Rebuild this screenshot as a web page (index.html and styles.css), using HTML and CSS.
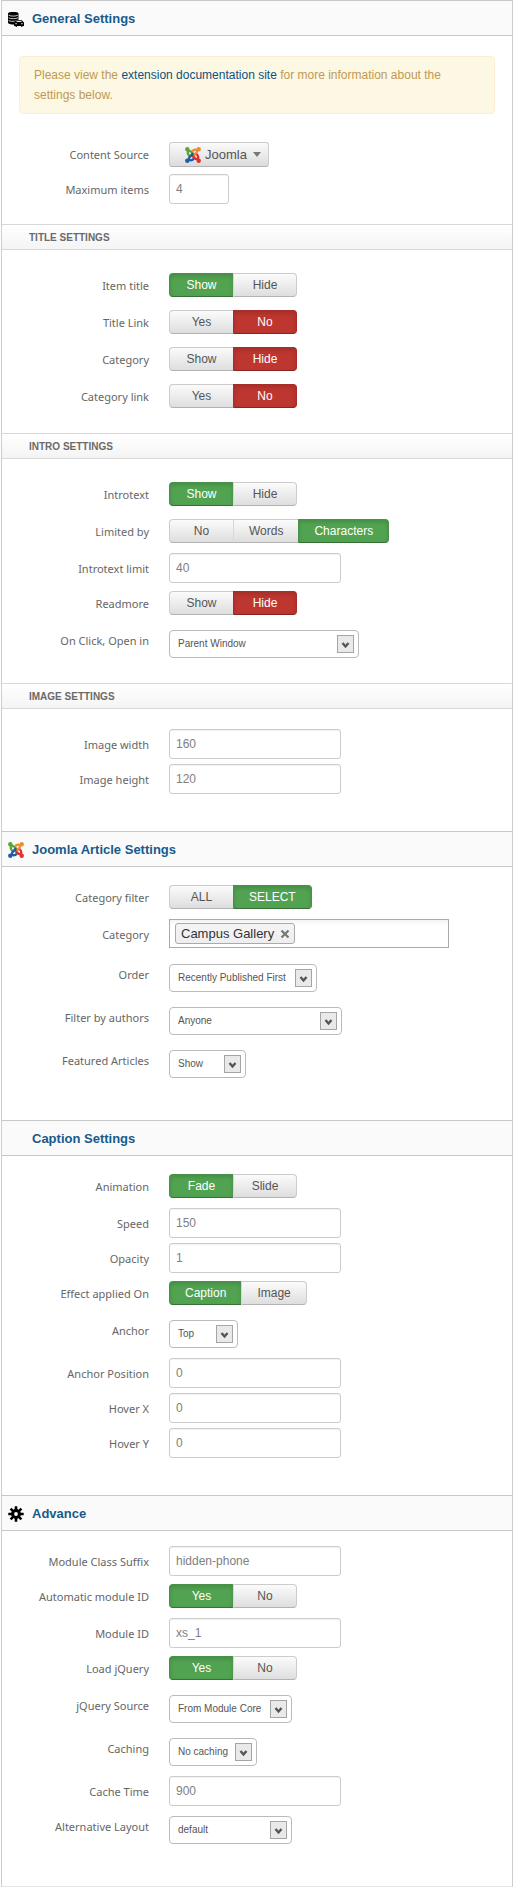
FILE: index.html
```html
<!DOCTYPE html>
<html lang="en">
<head>
<meta charset="utf-8">
<meta name="viewport" content="width=device-width, initial-scale=1">
<title>Module Settings</title>
<link rel="stylesheet" href="styles.css">
</head>
<body>
<svg class="defs" aria-hidden="true">
  <symbol id="joomla" viewBox="0 0 16 16">
    <g fill="none" stroke-width="2.3" stroke-linejoin="round">
      <path stroke="#5aa53a" d="M4.400 9C2.400 7 2 4.200 4.200 3.900 5.600 3.800 6.500 5 9.600 8"/>
      <path stroke="#f28b30" d="M4.400 9C2.400 7 2 4.200 4.200 3.900 5.600 3.800 6.500 5 9.600 8" transform="rotate(90 8 8)"/>
      <path stroke="#e0302c" d="M4.400 9C2.400 7 2 4.200 4.200 3.900 5.600 3.800 6.500 5 9.600 8" transform="rotate(180 8 8)"/>
      <path stroke="#1a5ea8" d="M4.400 9C2.400 7 2 4.200 4.200 3.900 5.600 3.800 6.500 5 9.600 8" transform="rotate(270 8 8)"/>
    </g>
    <circle cx="2.300" cy="2.300" r="2.200" fill="#5aa53a"/>
    <circle cx="13.700" cy="2.300" r="2.200" fill="#f28b30"/>
    <circle cx="13.700" cy="13.700" r="2.200" fill="#e0302c"/>
    <circle cx="2.300" cy="13.700" r="2.200" fill="#1a5ea8"/>
  </symbol>
  <symbol id="arrow" viewBox="0 0 17 18">
    <rect x=".5" y=".5" width="16" height="17" fill="#e9e9e9" stroke="#a5a5a5"/>
    <path d="M5.500 8l3 3.500 3-3.500" fill="none" stroke="#555" stroke-width="2.400"/>
  </symbol>
</svg>

<form class="panel">
  <section>
    <h2 class="head">
      <svg class="icon" viewBox="0 0 16 16" aria-hidden="true">
        <path d="M0 2.500C0 .6 10.500.6 10.500 2.500v6.300c-2.500 0-3 .7-3.600 1.900L6 11v2.500C3 13.500 0 13 0 11.500z"/>
        <path d="M.6 4.200c2 1.200 7.300 1.200 9.300 0M.6 6.800c2 1.200 7.300 1.200 9.300 0M.6 9.400c1.500 1 4 1.100 6 .8" fill="none" stroke="#fafafa" stroke-width=".8"/>
        <path d="M6 11.500l2.200-2.300h5.600l2.200 2.300v3.500h-1.500v.8h-1.500V15H9v.8H7.500V15H6z"/>
        <path d="M8.500 10.500h5M7.300 12.700h1.500M13.200 12.700h1.500" stroke="#fafafa" stroke-width=".9"/>
      </svg>
      <span>General Settings</span>
    </h2>
    <div class="intro">
      <p class="alert">Please view the <a href="#docs">extension documentation site</a> for more information about the settings below.</p>
    </div>
    <div class="fields fields-first">
      <div class="row row-drop"><span class="label" id="l-source">Content Source</span>
        <button type="button" class="drop" aria-labelledby="l-source"><svg class="icon" aria-hidden="true"><use href="#joomla"/></svg><span>Joomla</span><i class="caret"></i></button></div>
      <div class="row"><label class="label" for="max">Maximum items</label><input class="text short" id="max" value="4"></div>
    </div>

    <h3 class="subhead">TITLE SETTINGS</h3>
    <div class="fields">
      <div class="row row-toggle"><span class="label" id="l-title">Item title</span>
        <div class="toggle" role="radiogroup" aria-labelledby="l-title"><label class="opt yes"><input type="radio" name="title" checked>Show</label><label class="opt"><input type="radio" name="title">Hide</label></div></div>
      <div class="row row-toggle"><span class="label" id="l-tlink">Title Link</span>
        <div class="toggle" role="radiogroup" aria-labelledby="l-tlink"><label class="opt"><input type="radio" name="tlink">Yes</label><label class="opt no"><input type="radio" name="tlink" checked>No</label></div></div>
      <div class="row row-toggle"><span class="label" id="l-cat">Category</span>
        <div class="toggle" role="radiogroup" aria-labelledby="l-cat"><label class="opt"><input type="radio" name="cat">Show</label><label class="opt no"><input type="radio" name="cat" checked>Hide</label></div></div>
      <div class="row row-toggle"><span class="label" id="l-clink">Category link</span>
        <div class="toggle" role="radiogroup" aria-labelledby="l-clink"><label class="opt"><input type="radio" name="clink">Yes</label><label class="opt no"><input type="radio" name="clink" checked>No</label></div></div>
    </div>

    <h3 class="subhead">INTRO SETTINGS</h3>
    <div class="fields">
      <div class="row row-toggle"><span class="label" id="l-intro">Introtext</span>
        <div class="toggle" role="radiogroup" aria-labelledby="l-intro"><label class="opt yes"><input type="radio" name="intro" checked>Show</label><label class="opt"><input type="radio" name="intro">Hide</label></div></div>
      <div class="row row-toggle"><span class="label" id="l-limby">Limited by</span>
        <div class="toggle" role="radiogroup" aria-labelledby="l-limby"><label class="opt"><input type="radio" name="limby">No</label><label class="opt"><input type="radio" name="limby">Words</label><label class="opt yes"><input type="radio" name="limby" checked>Characters</label></div></div>
      <div class="row"><label class="label" for="limit">Introtext limit</label><input class="text" id="limit" value="40"></div>
      <div class="row row-toggle"><span class="label" id="l-more">Readmore</span>
        <div class="toggle" role="radiogroup" aria-labelledby="l-more"><label class="opt"><input type="radio" name="more">Show</label><label class="opt no"><input type="radio" name="more" checked>Hide</label></div></div>
      <div class="row row-select"><label class="label" for="target">On Click, Open in</label>
        <div class="select w-xl"><select id="target"><option>Parent Window</option></select><svg aria-hidden="true"><use href="#arrow"/></svg></div></div>
    </div>

    <h3 class="subhead">IMAGE SETTINGS</h3>
    <div class="fields fields-last">
      <div class="row"><label class="label" for="iw">Image width</label><input class="text" id="iw" value="160"></div>
      <div class="row"><label class="label" for="ih">Image height</label><input class="text" id="ih" value="120"></div>
    </div>
  </section>

  <section>
    <h2 class="head"><svg class="icon" aria-hidden="true"><use href="#joomla"/></svg><span>Joomla Article Settings</span></h2>
    <div class="fields fields-main">
      <div class="row row-toggle"><span class="label" id="l-filter">Category filter</span>
        <div class="toggle" role="radiogroup" aria-labelledby="l-filter"><label class="opt"><input type="radio" name="filter">ALL</label><label class="opt yes"><input type="radio" name="filter" checked>SELECT</label></div></div>
      <div class="row row-tags"><label class="label" for="cats">Category</label>
        <div class="tags"><span class="tag">Campus Gallery<button type="button" class="remove" aria-label="Remove Campus Gallery"><svg viewBox="0 0 10 10" aria-hidden="true"><path d="M1.500 1.500l7 7M8.500 1.500l-7 7" stroke="#777" stroke-width="2.200"/></svg></button></span><input class="tag-input" id="cats"></div></div>
      <div class="row row-select"><label class="label" for="order">Order</label>
        <div class="select w-l"><select id="order"><option>Recently Published First</option></select><svg aria-hidden="true"><use href="#arrow"/></svg></div></div>
      <div class="row row-select"><label class="label" for="authors">Filter by authors</label>
        <div class="select w-full"><select id="authors"><option>Anyone</option></select><svg aria-hidden="true"><use href="#arrow"/></svg></div></div>
      <div class="row row-select"><label class="label" for="featured">Featured Articles</label>
        <div class="select w-s"><select id="featured"><option>Show</option></select><svg aria-hidden="true"><use href="#arrow"/></svg></div></div>
    </div>
  </section>

  <section>
    <h2 class="head"><span class="icon"></span><span>Caption Settings</span></h2>
    <div class="fields fields-main">
      <div class="row row-toggle"><span class="label" id="l-anim">Animation</span>
        <div class="toggle" role="radiogroup" aria-labelledby="l-anim"><label class="opt yes"><input type="radio" name="anim" checked>Fade</label><label class="opt"><input type="radio" name="anim">Slide</label></div></div>
      <div class="row"><label class="label" for="speed">Speed</label><input class="text" id="speed" value="150"></div>
      <div class="row"><label class="label" for="opacity">Opacity</label><input class="text" id="opacity" value="1"></div>
      <div class="row row-toggle"><span class="label" id="l-effect">Effect applied On</span>
        <div class="toggle" role="radiogroup" aria-labelledby="l-effect"><label class="opt yes"><input type="radio" name="effect" checked>Caption</label><label class="opt"><input type="radio" name="effect">Image</label></div></div>
      <div class="row row-select"><label class="label" for="anchor">Anchor</label>
        <div class="select w-xs"><select id="anchor"><option>Top</option></select><svg aria-hidden="true"><use href="#arrow"/></svg></div></div>
      <div class="row"><label class="label" for="apos">Anchor Position</label><input class="text" id="apos" value="0"></div>
      <div class="row"><label class="label" for="hx">Hover X</label><input class="text" id="hx" value="0"></div>
      <div class="row"><label class="label" for="hy">Hover Y</label><input class="text" id="hy" value="0"></div>
    </div>
  </section>

  <section>
    <h2 class="head">
      <svg class="icon" viewBox="0 0 16 16" aria-hidden="true">
        <path d="M8 .3v15.400M.3 8h15.400M2.600 2.600l10.800 10.800M13.400 2.600L2.600 13.400" stroke="#000" stroke-width="2.600"/>
        <circle cx="8" cy="8" r="3.400" fill="#fafafa" stroke="#000" stroke-width="3"/>
      </svg>
      <span>Advance</span>
    </h2>
    <div class="fields fields-main">
      <div class="row"><label class="label" for="suffix">Module Class Suffix</label><input class="text" id="suffix" value="hidden-phone"></div>
      <div class="row row-toggle"><span class="label" id="l-auto">Automatic module ID</span>
        <div class="toggle" role="radiogroup" aria-labelledby="l-auto"><label class="opt yes"><input type="radio" name="auto" checked>Yes</label><label class="opt"><input type="radio" name="auto">No</label></div></div>
      <div class="row"><label class="label" for="mid">Module ID</label><input class="text" id="mid" value="xs_1"></div>
      <div class="row row-toggle"><span class="label" id="l-jq">Load jQuery</span>
        <div class="toggle" role="radiogroup" aria-labelledby="l-jq"><label class="opt yes"><input type="radio" name="jq" checked>Yes</label><label class="opt"><input type="radio" name="jq">No</label></div></div>
      <div class="row row-select"><label class="label" for="jqsrc">jQuery Source</label>
        <div class="select w-m"><select id="jqsrc"><option>From Module Core</option></select><svg aria-hidden="true"><use href="#arrow"/></svg></div></div>
      <div class="row row-select"><label class="label" for="caching">Caching</label>
        <div class="select w-c"><select id="caching"><option>No caching</option></select><svg aria-hidden="true"><use href="#arrow"/></svg></div></div>
      <div class="row"><label class="label" for="ctime">Cache Time</label><input class="text" id="ctime" value="900"></div>
      <div class="row row-select"><label class="label" for="layout">Alternative Layout</label>
        <div class="select w-m"><select id="layout"><option>default</option></select><svg aria-hidden="true"><use href="#arrow"/></svg></div></div>
    </div>
  </section>
</form>
</body>
</html>
```
FILE: styles.css
```css
* { box-sizing: border-box; }

body {
  margin: 0;
  padding: 0 1px;
  background: #fff;
  color: #555;
  font: 12px/18px "Liberation Sans", Arial, sans-serif;
}

h2, h3, p { margin: 0; }

input, select, button { font: inherit; color: inherit; margin: 0; }

.defs { display: none; }

.panel {
  border: 1px solid #ccc;
  border-top: 0;
  border-bottom-color: #e4e4e4;
}

.head {
  display: flex;
  align-items: center;
  gap: 8px;
  height: 36px;
  padding: 1px 6px 0;
  border-top: 1px solid #c8c8c8;
  border-bottom: 1px solid #c8c8c8;
  background: #fafafa;
  color: #175a8c;
  font-size: 13px;
  font-weight: bold;
}

.icon { width: 16px; height: 16px; flex: none; }

.subhead {
  height: 26px;
  padding: 0 27px;
  border-top: 1px solid #d8d8d8;
  border-bottom: 1px solid #d8d8d8;
  background: linear-gradient(#fff, #f4f4f4);
  color: #6a6a6a;
  font-size: 10px;
  line-height: 25px;
}

.intro { padding: 20px 17px 28px; }

.alert {
  padding: 8px 14px;
  border: 1px solid #fbeed5;
  border-radius: 4px;
  background: #fcf8e3;
  color: #c09853;
  line-height: 20px;
}

.alert a { color: #10507f; text-decoration: none; }

.fields { padding: 20px 17px 15px 0; }
.fields-first { padding-top: 0; }
.fields-last { padding-bottom: 32px; }
.fields-main { padding: 15px 17px 32px 0; }

.row {
  display: grid;
  grid-template-columns: 147px minmax(0, 1fr);
  column-gap: 20px;
  align-items: start;
  justify-items: start;
  padding-bottom: 5px;
}

.row-toggle { padding: 3px 0 10px; }
.row-select { padding: 5px 0 10px; }
.row-tags { padding-bottom: 11px; }
.row-drop { padding-bottom: 7px; }

.label {
  justify-self: end;
  padding-top: 7px;
  color: #666;
  font: 11px/18px "Noto Sans", "Open Sans", sans-serif;
}

.row-toggle .label, .row-drop .label { padding-top: 4px; }
.row-select .label { padding-top: 2px; }

.text {
  width: 172px;
  max-width: 100%;
  height: 30px;
  padding: 0 6px;
  border: 1px solid #ccc;
  border-radius: 3px;
  background: #fff;
  box-shadow: inset 0 1px 1px rgba(0, 0, 0, .06);
  color: #808080;
}

.short { width: 60px; }

.toggle { display: flex; }

.opt {
  position: relative;
  min-width: 64px;
  height: 24px;
  padding: 0 15px;
  border: 1px solid #ccc;
  border-bottom-color: #b3b3b3;
  background: linear-gradient(#fbfbfb, #dedede);
  line-height: 22px;
  text-align: center;
}

.opt:first-child { border-radius: 4px 0 0 4px; }
.opt:last-child { border-radius: 0 4px 4px 0; }
.opt:not(:first-child) { border-left-color: #d8d8d8; }
.opt:not(:last-child) { border-right-width: 0; }

.opt input {
  position: absolute;
  inset: 0;
  width: 100%;
  height: 100%;
  opacity: 0;
}

.opt.yes {
  border-color: #479148 #479148 #387038;
  background: #51a351;
  box-shadow: inset 0 2px 4px rgba(0, 0, 0, .15);
  color: #fff;
}

.opt.no {
  border-color: #a82c27 #a82c27 #8a2420;
  background: #bd362f;
  box-shadow: inset 0 2px 4px rgba(0, 0, 0, .15);
  color: #fff;
}

.drop {
  display: flex;
  align-items: center;
  gap: 4px;
  width: 100px;
  height: 25px;
  padding: 0 7px 0 15px;
  border: 1px solid #ccc;
  border-bottom-color: #b3b3b3;
  border-radius: 3px;
  background: linear-gradient(#fafafa, #dcdcdc);
  font-size: 13px;
}

.caret {
  margin-left: auto;
  border: 4px solid transparent;
  border-top: 5px solid #777;
  border-bottom: 0;
}

.select { position: relative; max-width: 100%; }

.select select {
  appearance: none;
  display: block;
  width: 100%;
  height: 28px;
  padding: 0 0 1px 8px;
  border: 1px solid #bbb;
  border-radius: 4px;
  background: #fff;
  font-size: 10px;
}

.select svg {
  position: absolute;
  top: 5px;
  right: 5px;
  width: 17px;
  height: 18px;
  pointer-events: none;
}

.w-xs { width: 69px; }
.w-s { width: 77px; }
.w-c { width: 88px; }
.w-m { width: 123px; }
.w-l { width: 148px; }
.w-full { width: 173px; }
.w-xl { width: 190px; }

.tags {
  display: flex;
  align-items: center;
  width: 280px;
  max-width: 100%;
  height: 29px;
  padding: 0 5px;
  border: 1px solid #aaa;
  background: linear-gradient(#f2f2f2, #fff 5px);
}

.tag {
  display: flex;
  align-items: center;
  gap: 6px;
  height: 21px;
  padding: 0 4px 0 5px;
  border: 1px solid #aaa;
  border-radius: 3px;
  background: linear-gradient(#f4f4f4, #eee);
  color: #333;
  font-size: 13px;
  white-space: nowrap;
}

.remove {
  display: flex;
  padding: 0;
  border: 0;
  background: none;
}

.remove svg { width: 10px; height: 10px; }

.tag-input {
  flex: 1;
  min-width: 0;
  height: 20px;
  border: 0;
  background: none;
  outline: 0;
}
```
